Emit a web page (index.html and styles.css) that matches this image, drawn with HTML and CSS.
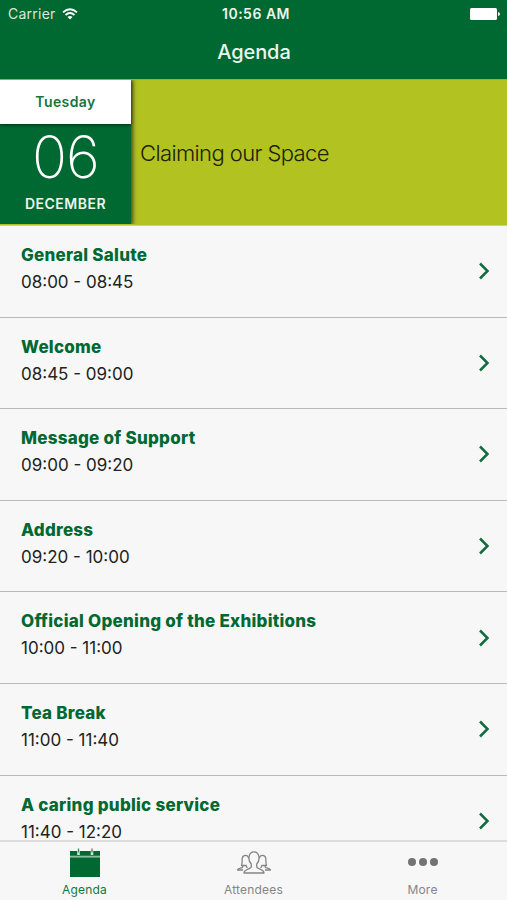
FILE: index.html
```html
<!DOCTYPE html>
<html lang="en">
<head>
<meta charset="utf-8">
<title>Agenda</title>
<link rel="stylesheet" href="styles.css">
</head>
<body>
<div class="app">
  <header class="top">
    <div class="status">
      <div class="carrier"><span>Carrier</span>
        <svg class="wifi" width="16" height="12" viewBox="0 0 16 12" fill="none" stroke="#fff" stroke-width="1.8"><path d="M1 4.3Q8-1.9 15 4.300M3.500 7Q8 3.100 12.500 7"/><path d="M5.500 9Q8 7 10.500 9L8 11.500z" fill="#fff" stroke="none"/></svg>
      </div>
      <div class="clock">10:56 AM</div>
      <div class="power"><svg width="30" height="12" viewBox="0 0 30 12" fill="#fff"><rect width="27" height="12" rx="1.5"/><path d="M28 4q2 .3 2 2t-2 2z"/></svg></div>
    </div>
    <h1 class="title">Agenda</h1>
  </header>
  <section class="day">
    <div class="date">
      <div class="weekday">Tuesday</div>
      <div class="number">06</div>
      <div class="month">DECEMBER</div>
    </div>
    <h2 class="theme">Claiming our Space</h2>
  </section>
  <main class="list">
    <div class="row"><div class="session"><h3 class="name">General Salute</h3><p class="time">08:00 - 08:45</p></div><svg class="chevron" viewBox="0 0 12 18"><path d="M2 1.500l7.500 7.500L2 16.500"/></svg></div>
    <div class="row"><div class="session"><h3 class="name">Welcome</h3><p class="time">08:45 - 09:00</p></div><svg class="chevron" viewBox="0 0 12 18"><path d="M2 1.500l7.500 7.500L2 16.500"/></svg></div>
    <div class="row"><div class="session"><h3 class="name">Message of Support</h3><p class="time">09:00 - 09:20</p></div><svg class="chevron" viewBox="0 0 12 18"><path d="M2 1.500l7.500 7.500L2 16.500"/></svg></div>
    <div class="row"><div class="session"><h3 class="name">Address</h3><p class="time">09:20 - 10:00</p></div><svg class="chevron" viewBox="0 0 12 18"><path d="M2 1.500l7.500 7.500L2 16.500"/></svg></div>
    <div class="row"><div class="session"><h3 class="name">Official Opening of the Exhibitions</h3><p class="time">10:00 - 11:00</p></div><svg class="chevron" viewBox="0 0 12 18"><path d="M2 1.500l7.500 7.500L2 16.500"/></svg></div>
    <div class="row"><div class="session"><h3 class="name">Tea Break</h3><p class="time">11:00 - 11:40</p></div><svg class="chevron" viewBox="0 0 12 18"><path d="M2 1.500l7.500 7.500L2 16.500"/></svg></div>
    <div class="row"><div class="session"><h3 class="name">A caring public service</h3><p class="time">11:40 - 12:20</p></div><svg class="chevron" viewBox="0 0 12 18"><path d="M2 1.500l7.500 7.500L2 16.500"/></svg></div>
  </main>
  <nav class="tabs">
    <div class="tab active">
      <svg width="36" height="32" viewBox="0 0 36 32"><path fill="#006831" d="M3 6h30v5H3zM3 12.300h30V32H3z"/><path d="M3 11.500h30" stroke="#8fbd9f" stroke-width="1.600"/><path d="M11.500 4v6M25 4v6" stroke="#d5e6da" stroke-width="2.600"/><path d="M11.500 3.500v4M25 3.500v4" stroke="#3d8a60" stroke-width="1.200"/></svg>
      <span>Agenda</span>
    </div>
    <div class="tab">
      <svg width="36" height="32" viewBox="0 0 36 32" fill="none" stroke="#858585" stroke-width="1.300" stroke-linejoin="round"><path d="M15.300 21.500V19c-2-2-2.700-5.500-2.100-8 .6-2.800 2.500-4.200 4.800-4.200s4.200 1.400 4.800 4.200c.6 2.500-.1 6-2.100 8v2.500c0 3 7.300 2.300 7.300 6.500H8c0-4.200 7.300-3.500 7.300-6.500z"/><path d="M10.500 20.500H5.500c1-3 .5-5 .7-7 .3-2.200 1.500-3.200 3.300-3.200 1.600 0 2.700 1 3 2.700M6.800 20.500V22c-.5 1.500-4.800 1-5.300 3H7M10.500 20.500V22l1 .8M25.500 20.500h5c-1-3-.5-5-.7-7-.3-2.200-1.500-3.200-3.300-3.200-1.600 0-2.700 1-3 2.700M29.200 20.500V22c.5 1.500 4.800 1 5.300 3H29M25.500 20.500V22l-1 .8"/></svg>
      <span>Attendees</span>
    </div>
    <div class="tab">
      <svg width="36" height="32" viewBox="0 0 36 32" fill="#737373"><circle cx="7" cy="17" r="4"/><circle cx="18" cy="17" r="4"/><circle cx="29" cy="17" r="4"/></svg>
      <span>More</span>
    </div>
  </nav>
</div>
</body>
</html>
```
FILE: styles.css
```css
* { box-sizing: border-box; }
body { margin: 0; font-family: Inter, "Liberation Sans", sans-serif; background: #f7f7f7; }
h1, h2, h3, p { margin: 0; }
.app { width: 507px; height: 900px; display: flex; flex-direction: column; overflow: hidden; }
.top { height: 80px; flex: none; background: #006831; color: #fff; border-bottom: 1px solid #87ad72; }
.status { height: 27px; padding: 0 7px 0 8px; display: grid; grid-template-columns: 1fr auto 1fr; align-items: center; }
.carrier { display: flex; align-items: center; gap: 6px; font-size: 14px; letter-spacing: .25px; color: #d9eadf; }
.wifi { display: block; }
.clock { padding-left: 4px; font-size: 14px; font-weight: 600; letter-spacing: .5px; color: #ecf5ee; }
.power { display: flex; justify-content: flex-end; }
.title { font-size: 20px; line-height: 50px; font-weight: 500; letter-spacing: -.1px; text-align: center; padding-left: 1px; color: #ecf5ee; }
.day { height: 146px; flex: none; display: flex; background: #b1c221; border-bottom: 1px solid #c8c9b4; }
.date { width: 131px; background: #006831; color: #fff; text-align: center; box-shadow: 2px 0 4px rgba(0,0,0,.6); clip-path: inset(0 -8px 1px 0); }
.weekday { height: 44px; line-height: 44px; background: #fff; color: #17753f; font-size: 14px; font-weight: 600; letter-spacing: .4px; box-shadow: 0 1px 3px rgba(0,0,0,.55); }
.number { height: 66px; line-height: 67px; font-size: 58px; font-weight: 200; letter-spacing: -1px; }
.month { font-size: 14px; line-height: 28px; font-weight: 600; letter-spacing: .5px; color: #ecf5ee; }
.theme { align-self: center; padding: 1px 0 0 9px; font-size: 22px; font-weight: 350; letter-spacing: -.6px; color: #1c2005; }
.list { flex: 1; min-height: 0; overflow: hidden; }
.row { height: 91.6px; padding: 0 17.5px 0 21px; display: flex; align-items: center; justify-content: space-between; border-bottom: 1px solid #b9b9b9; }
.session { align-self: flex-start; padding-top: 16px; }
.name { font-size: 17px; line-height: 27px; font-weight: 800; letter-spacing: .25px; color: #006831; }
.time { margin-top: 5px; font-size: 17px; line-height: 17px; color: #222; }
.chevron { width: 12px; height: 18px; fill: none; stroke: #146b3f; stroke-width: 2.5; }
.tabs { height: 60px; flex: none; display: grid; grid-template-columns: repeat(3, 1fr); border-top: 2px solid #dcdcdc; }
.tab { display: flex; flex-direction: column; align-items: center; font-size: 12px; line-height: 15px; letter-spacing: .2px; color: #858585; }
.tab svg { margin: 3px 0 5px; }
.active { color: #17753f; }
```
